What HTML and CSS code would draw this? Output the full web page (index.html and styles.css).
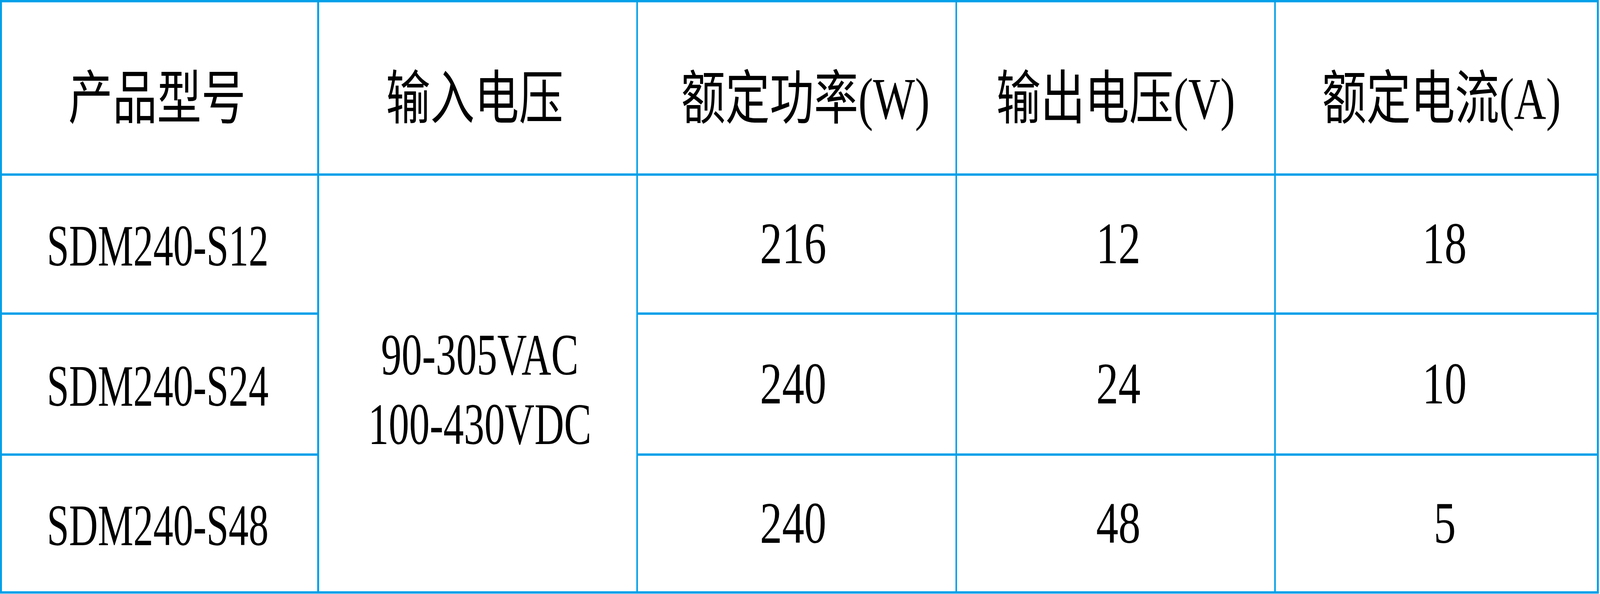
FILE: index.html
```html
<!DOCTYPE html>
<html lang="zh-CN">
<head>
<meta charset="utf-8">
<title>SDM240 规格表</title>
<link rel="stylesheet" href="styles.css">
</head>
<body>
<div class="spec-table">
  <div class="cell head c1"><span class="t">产品型号</span></div>
  <div class="cell head c2"><span class="t">输入电压</span></div>
  <div class="cell head c3"><span class="t">额定功率(W)</span></div>
  <div class="cell head c4"><span class="t">输出电压(V)</span></div>
  <div class="cell head c5"><span class="t">额定电流(A)</span></div>

  <div class="cell data c1"><span class="t model">SDM240-S12</span></div>
  <div class="cell input"><span class="t volt">90-305VAC<br>100-430VDC</span></div>
  <div class="cell data c3"><span class="t">216</span></div>
  <div class="cell data c4"><span class="t">12</span></div>
  <div class="cell data c5"><span class="t">18</span></div>

  <div class="cell data c1"><span class="t model">SDM240-S24</span></div>
  <div class="cell data c3"><span class="t">240</span></div>
  <div class="cell data c4"><span class="t">24</span></div>
  <div class="cell data c5"><span class="t">10</span></div>

  <div class="cell data c1"><span class="t model">SDM240-S48</span></div>
  <div class="cell data c3"><span class="t">240</span></div>
  <div class="cell data c4"><span class="t">48</span></div>
  <div class="cell data c5"><span class="t">5</span></div>
</div>
<script src="fit.js"></script>
</body>
</html>
```

FILE: fit.js
```js
(function () {
  var designWidth = 5415;
  function fit() {
    var sx = Math.min(1, document.documentElement.clientWidth / designWidth);
    document.documentElement.style.setProperty('--sx', String(sx));
  }
  fit();
  window.addEventListener('resize', fit);
})();
```

FILE: styles.css
```css
:root {
  --sx: 1;
}

html, body {
  margin: 0;
  padding: 0;
  background: #ffffff;
}

.spec-table {
  box-sizing: border-box;
  width: calc(100% - 4px * var(--sx));
  height: 1520px;
  display: grid;
  grid-template-columns: 1068fr 1073fr 1074fr 1073fr 1086fr;
  grid-template-rows: 438px 350px 355px 347px;
  column-gap: calc(6px * var(--sx));
  row-gap: 6px;
  padding: 6px calc(7px * var(--sx)) 6px calc(6px * var(--sx));
  background: #00a0e9;
  font-family: "Liberation Serif", "Noto Sans CJK SC", serif;
  font-size: 150px;
  line-height: 1;
  color: #000000;
}

.cell {
  box-sizing: border-box;
  min-width: 0;
  background: #ffffff;
  display: flex;
  align-items: center;
  justify-content: center;
  text-align: center;
  white-space: nowrap;
}

.t {
  display: inline-block;
  flex: none;
  transform: scaleX(var(--sx));
}

.head {
  padding-top: 56px;
}
.head.c1 { padding-right: calc(16px * var(--sx)); }
.head.c2 { padding-right: calc(20px * var(--sx)); }
.head.c3 { padding-left: calc(60px * var(--sx)); }
.head.c5 { padding-left: calc(34px * var(--sx)); }

.data {
  padding-bottom: 4px;
}
.data.c1 {
  padding-top: 8px;
  padding-bottom: 0;
  padding-right: calc(12px * var(--sx));
}
.data.c3 { padding-right: calc(24px * var(--sx)); }
.data.c4 { padding-left: calc(20px * var(--sx)); }
.data.c5 { padding-left: calc(56px * var(--sx)); }

.input {
  grid-row: span 3;
  padding-top: 30px;
  padding-left: calc(14px * var(--sx));
}

.model {
  transform: scaleX(calc(0.9 * var(--sx)));
}

.volt {
  line-height: 178px;
  transform: scaleX(calc(0.925 * var(--sx)));
}
```
